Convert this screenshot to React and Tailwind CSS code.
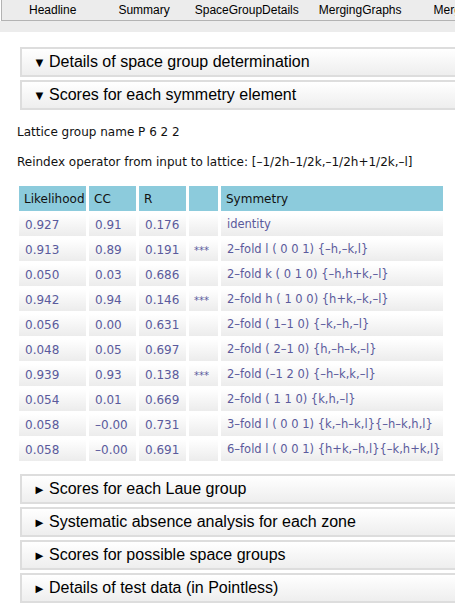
import React from "react";

const tabs = [
  { name: "Headline", ml: "ml-[27px]" },
  { name: "Summary", ml: "ml-[42px]" },
  { name: "SpaceGroupDetails", ml: "ml-[25px]" },
  { name: "MergingGraphs", ml: "ml-[20px]" },
  { name: "MergingStats", ml: "ml-[32px]" },
];

const rows = [
  ["0.927", "0.91", "0.176", "", "identity"],
  ["0.913", "0.89", "0.191", "***", "2–fold l ( 0 0 1) {–h,–k,l}"],
  ["0.050", "0.03", "0.686", "", "2–fold k ( 0 1 0) {–h,h+k,–l}"],
  ["0.942", "0.94", "0.146", "***", "2–fold h ( 1 0 0) {h+k,–k,–l}"],
  ["0.056", "0.00", "0.631", "", "2–fold ( 1–1 0) {–k,–h,–l}"],
  ["0.048", "0.05", "0.697", "", "2–fold ( 2–1 0) {h,–h–k,–l}"],
  ["0.939", "0.93", "0.138", "***", "2–fold (–1 2 0) {–h–k,k,–l}"],
  ["0.054", "0.01", "0.669", "", "2–fold ( 1 1 0) {k,h,–l}"],
  ["0.058", "–0.00", "0.731", "", "3–fold l ( 0 0 1) {k,–h–k,l}{–h–k,h,l}"],
  ["0.058", "–0.00", "0.691", "", "6–fold l ( 0 0 1) {h+k,–h,l}{–k,h+k,l}"],
];

function Panel({ open, title, className }) {
  return (
    <div
      className={`ml-[20px] w-[460px] h-[30px] border-2 border-[#dddddd] bg-gradient-to-b from-white to-[#eeeeee] flex items-center pl-[11px] ${className || ""}`}
    >
      <span className="text-[13px] w-[16px] leading-none">{open ? "▼" : "►"}</span>
      <span className="text-[16px] text-black">{title}</span>
    </div>
  );
}

export default function App() {
  return (
    <div className="w-[455px] h-[606px] overflow-hidden bg-white font-['Liberation_Sans',Arial,sans-serif]">
      {/* tab bar */}
      <div className="ml-px h-[21px] bg-[#ececec] border-l border-b border-[#b3b3b3] flex items-center whitespace-nowrap text-[12px] text-black overflow-hidden">
        {tabs.map((t) => (
          <span key={t.name} className={t.ml}>
            {t.name}
          </span>
        ))}
      </div>
      <div className="h-[11px] bg-[#ececec]" />

      <div className="pt-[15px]">
        <Panel open title="Details of space group determination" />
        <Panel open title="Scores for each symmetry element" className="mt-[3px] h-[29px]" />

        <div className="font-['DejaVu_Sans',Verdana,sans-serif] text-[12px] text-[#111]">
          <p className="ml-[17px] mt-[15px] leading-[14px]">Lattice group name P 6 2 2</p>
          <p className="ml-[17px] mt-[16px] leading-[14px]">
            Reindex operator from input to lattice: [–1/2h–1/2k,–1/2h+1/2k,–l]
          </p>

          <table className="ml-[16px] mt-[14px] border-separate border-spacing-[3px]">
            <thead>
              <tr className="bg-[#8ccbdc] h-[25px] text-left">
                <th className="w-[67px] pl-[5px] font-normal">Likelihood</th>
                <th className="w-[47px] pl-[5px] font-normal">CC</th>
                <th className="w-[47px] pl-[5px] font-normal">R</th>
                <th className="w-[29px] font-normal"></th>
                <th className="w-[222px] pl-[5px] font-normal">Symmetry</th>
              </tr>
            </thead>
            <tbody>
              {rows.map((r, i) => (
                <tr key={i} className="h-[22px] text-[#5a5a9c]">
                  {r.map((c, j) => (
                    <td
                      key={j}
                      className={`bg-gradient-to-b from-white to-[#ececec] whitespace-nowrap ${
                        j === 3 ? "pl-[5px] text-[10px]" : "pl-[6px]"
                      } ${j === 4 ? "text-[11.5px]" : ""}`}
                    >
                      {c}
                    </td>
                  ))}
                </tr>
              ))}
            </tbody>
          </table>
        </div>

        <Panel title="Scores for each Laue group" className="mt-[10px]" />
        <Panel title="Systematic absence analysis for each zone" className="mt-[3px]" />
        <Panel title="Scores for possible space groups" className="mt-[3px]" />
        <Panel title="Details of test data (in Pointless)" className="mt-[3px]" />
      </div>
    </div>
  );
}
